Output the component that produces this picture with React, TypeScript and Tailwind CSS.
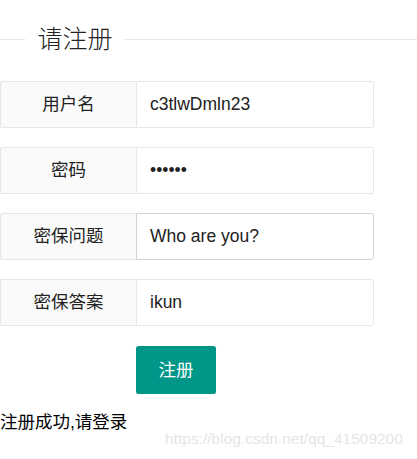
const fields = [
  { label: "用户名", value: "c3tlwDmln23", active: false },
  { label: "密码", value: "••••••", active: false },
  { label: "密保问题", value: "Who are you?", active: true },
  { label: "密保答案", value: "ikun", active: false },
];

export default function App() {
  return (
    <div
      className="relative w-[417px] h-[459px] bg-white text-[#333] overflow-hidden"
      style={{ fontFamily: '"Liberation Sans", "Noto Sans CJK SC", sans-serif' }}
    >
      {/* title */}
      <div className="flex items-center h-[28px] mt-[25px]">
        <div className="w-[25px] h-px bg-[#e6e6e6]" />
        <span className="px-[12.5px] text-[25px] leading-[28px] font-light text-[#222]">请注册</span>
        <div className="flex-1 h-px bg-[#e6e6e6]" />
      </div>

      {/* form */}
      <div className="mt-[28px] flex flex-col gap-[19px]">
        {fields.map((f) => (
          <div key={f.label} className="flex h-[47px] w-[374px]">
            <div className="w-[136px] shrink-0 flex items-center justify-center bg-[#fafafa] border border-r-0 border-[#e6e6e6] rounded-l-[2.5px] text-[17.5px] text-[#222]">
              {f.label}
            </div>
            <div
              className={
                f.active
                  ? "flex-1 flex items-center pl-[13px] border border-[#d2d2d2] rounded-r-[2.5px] text-[17.5px] text-[#222]"
                  : "flex-1 flex items-center pl-[13px] border border-[#e6e6e6] rounded-r-[2.5px] text-[17.5px] text-[#222]"
              }
            >
              {f.value}
            </div>
          </div>
        ))}
      </div>

      <div className="mt-[20px] ml-[136px]">
        <button className="w-[80px] h-[48px] bg-[#009688] text-white text-[17.5px] rounded-[2.5px]">
          注册
        </button>
      </div>

      <div className="mt-[16px] text-[17.5px] leading-[24px] text-black">注册成功,请登录</div>

      {/* watermark */}
      <div className="absolute left-[165px] top-[429px] text-[15.5px] leading-[20px] text-[#e6e6e6] whitespace-nowrap">
        https://blog.csdn.net/qq_41509200
      </div>
    </div>
  );
}
